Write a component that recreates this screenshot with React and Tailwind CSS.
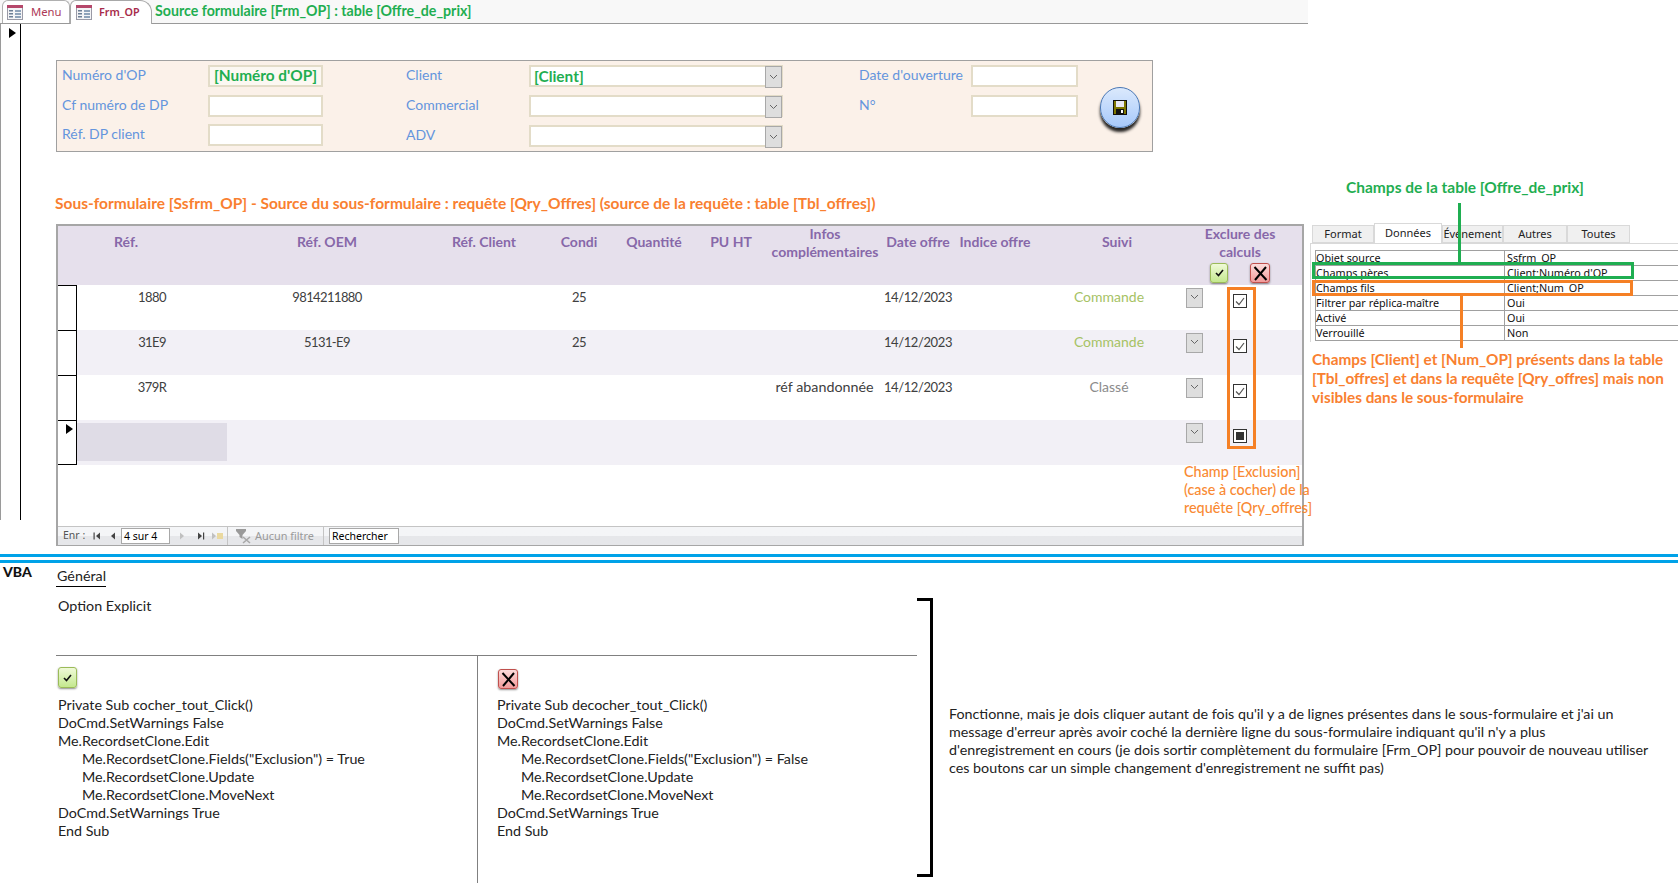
import { Fragment } from 'react';

const FormIcon = () => (
  <svg width="16" height="15" viewBox="0 0 16 15" className="shrink-0">
    <rect x="0.5" y="0.5" width="15" height="14" fill="#f4f4f6" stroke="#9a9aa6" />
    <rect x="0" y="0" width="16" height="3" fill="#b5476a" />
    <rect x="2" y="5" width="4" height="1.5" fill="#6d7f95" />
    <rect x="2" y="8" width="4" height="1.5" fill="#6d7f95" />
    <rect x="2" y="11" width="4" height="1.5" fill="#6d7f95" />
    <rect x="8" y="5" width="6" height="2" fill="#8fa3ba" />
    <rect x="8" y="8" width="6" height="2" fill="#8fa3ba" />
    <rect x="8" y="11" width="6" height="2" fill="#8fa3ba" />
  </svg>
);

const Arrow = () => (
  <svg width="7" height="10" viewBox="0 0 7 10" className="shrink-0">
    <path d="M0 0L7 5L0 10Z" fill="#000" />
  </svg>
);

const Chevron = ({ className }) => (
  <svg width="9" height="6" viewBox="0 0 9 6" className={className}>
    <path d="M1 1L4.5 4.5L8 1" fill="none" stroke="#666" strokeWidth="1" />
  </svg>
);

const ComboButton = ({ tall }) => (
  <div
    className={`flex w-[17px] justify-center border border-[#a8a8a8] bg-[#dedede] ${
      tall ? 'h-full items-center' : 'h-[20px] items-start pt-[5px]'
    }`}
  >
    <Chevron />
  </div>
);

const GreenButton = ({ className }) => (
  <div
    className={`flex h-[20px] w-[18px] items-center justify-center rounded-[3px] border border-[#9bbb59] bg-gradient-to-b from-[#f0fad8] to-[#c4e88e] shadow-[0_1px_2px_rgba(0,0,0,0.45)] ${className}`}
  >
    <svg width="9" height="8" viewBox="0 0 9 8">
      <path d="M1 4L3.5 6.5L8 1" fill="none" stroke="#111" strokeWidth="1.6" />
    </svg>
  </div>
);

const RedButton = ({ className }) => (
  <div
    className={`flex h-[20px] w-[20px] items-center justify-center rounded-[3px] border border-[#c0504d] bg-gradient-to-b from-[#fbdcdc] to-[#f19a9a] shadow-[0_1px_2px_rgba(0,0,0,0.45)] ${className}`}
  >
    <svg width="15" height="15" viewBox="0 0 15 15">
      <path d="M1.5 1L13.5 14M13 1L2 14" fill="none" stroke="#000" strokeWidth="2" />
    </svg>
  </div>
);

const CheckBox = ({ mixed }) => (
  <div className="flex h-[14px] w-[14px] items-center justify-center border border-[#333] bg-white">
    {mixed ? (
      <div className="h-[8px] w-[8px] bg-[#333]" />
    ) : (
      <svg width="10" height="9" viewBox="0 0 10 9">
        <path d="M1 4.5L4 7.5L9 1" fill="none" stroke="#555" strokeWidth="1.2" />
      </svg>
    )}
  </div>
);

const Field = ({ wide }) => <div className={`h-[22px] border-2 border-[#e3dcc8] bg-white ${wide || ''}`} />;

const Combo = ({ children }) => (
  <div className="flex h-[22px] w-[254px] border-2 border-[#e3dcc8] bg-white">
    <div className="flex-1 pl-[3px] text-[15.4px] leading-[18px] font-bold text-[#1fae51]">{children}</div>
    <div className="-my-[1px] -mr-[1px] h-[22px]">
      <ComboButton tall />
    </div>
  </div>
);

const FormLabel = ({ children, className }) => (
  <div className={`-mt-[2px] text-[14px] leading-[20px] text-[#6495dd] ${className || ''}`}>{children}</div>
);

const headers = [
  { label: 'Réf.', cls: 'ml-[38px] w-[60px]' },
  { label: 'Réf. OEM', cls: 'ml-[121px] w-[100px]' },
  { label: 'Réf. Client', cls: 'ml-[67px] w-[80px]' },
  { label: 'Condi', cls: 'ml-[30px] w-[50px]' },
  { label: 'Quantité', cls: 'ml-[15px] w-[70px]' },
  { label: 'PU HT', cls: 'ml-[17px] w-[50px]' },
  { label: 'Infos complémentaires', cls: 'ml-[14px] w-[110px] -mt-[8px]' },
  { label: 'Date offre', cls: 'ml-[5px] w-[66px]' },
  { label: 'Indice offre', cls: 'ml-[6px] w-[76px]' },
  { label: 'Suivi', cls: 'ml-[59px] w-[50px]' },
];

const rows = [
  { ref: '1880', oem: '9814211880', condi: '25', date: '14/12/2023', suivi: 'Commande', tone: 'text-[#a6c264]' },
  { ref: '31E9', oem: '5131-E9', condi: '25', date: '14/12/2023', suivi: 'Commande', tone: 'text-[#a6c264]', alt: true },
  { ref: '379R', infos: 'réf abandonnée', date: '14/12/2023', suivi: 'Classé', tone: 'text-[#8b8b8b]' },
  { alt: true, isNew: true },
];

const Row = ({ row, last }) => (
  <div className="flex h-[45px]">
    <div
      className={`w-[19px] border-t border-r border-black bg-white pt-[3px] pl-[8px] ${last ? 'border-b' : ''}`}
    >
      {row.isNew && <Arrow />}
    </div>
    <div
      className={`grid flex-1 grid-cols-[150px_200px_124px_56px_166px_103px_84px_100px_98px_28px_17px_30px_14px_1fr] text-center text-[13px] leading-[18px] text-[#404040] ${
        row.alt ? 'bg-[#f2f0f6]' : 'bg-white'
      }`}
    >
      <div className="pt-[3px] tracking-[-0.6px]">
        {row.isNew ? <div className="h-[38px] bg-[#dfdce6]" /> : row.ref}
      </div>
      <div className="pt-[3px] tracking-[-0.6px]">{row.oem}</div>
      <div />
      <div className="pt-[3px] tracking-[-0.6px]">{row.condi}</div>
      <div />
      <div className="pt-[3px] text-[14.3px] whitespace-nowrap">{row.infos}</div>
      <div className="pt-[3px] tracking-[-0.4px]">{row.date}</div>
      <div />
      <div className={`pt-[3px] text-[14px] ${row.tone || ''}`}>{row.suivi}</div>
      <div />
      <div className="pt-[3px]">
        <ComboButton />
      </div>
      <div />
      <div className="pt-[9px]">
        <CheckBox mixed={row.isNew} />
      </div>
    </div>
  </div>
);

const NavTriangle = ({ dir, color, bar }) => (
  <svg width="8" height="8" viewBox="0 0 8 8" className="shrink-0">
    {dir === 'left' ? (
      <path d={bar ? 'M7 0.5L3 4L7 7.5Z' : 'M5 0.5L1 4L5 7.5Z'} fill={color} />
    ) : (
      <path d="M1 0.5L5 4L1 7.5Z" fill={color} />
    )}
    {bar && <rect x={dir === 'left' ? 0.5 : 6} y="0.5" width="1.2" height="7" fill={color} />}
  </svg>
);

const NavBar = () => (
  <div className="flex h-[19px] items-center border-t border-[#c4c4c4] bg-gradient-to-b from-[#f4f5f7] from-50% to-[#e6e7ea] to-50% [font-family:'Noto_Sans',sans-serif] text-[10.5px] text-[#555]">
    <div className="ml-[5px] w-[30px] whitespace-nowrap">Enr :</div>
    <NavTriangle dir="left" bar color="#444" />
    <div className="ml-[9px]">
      <NavTriangle dir="left" color="#444" />
    </div>
    <div className="ml-[3px] h-[16px] w-[49px] border border-[#a8a8a8] bg-white pl-[2px] leading-[14px] text-black">
      4 sur 4
    </div>
    <div className="ml-[9px]">
      <NavTriangle dir="right" color="#c0c0c0" />
    </div>
    <div className="ml-[10px]">
      <NavTriangle dir="right" bar color="#444" />
    </div>
    <div className="ml-[6px] flex w-[14px] items-center gap-[1px]">
      <NavTriangle dir="right" color="#c0c0c0" />
      <div className="-ml-[3px] h-[6px] w-[6px] bg-[#ead9a0]" />
    </div>
    <div className="ml-[2px] h-full border-l border-[#c4c4c4]" />
    <svg width="16" height="15" viewBox="0 0 16 15" className="ml-[8px] shrink-0">
      <path d="M0 0H10V2L6.5 6V10L3.5 8V6L0 2Z" fill="#9a9a9a" />
      <path d="M7 8L14 14M14 8L7 14" stroke="#a8a8a8" strokeWidth="1.6" />
    </svg>
    <div className="ml-[3px] w-[68px] text-[10.9px] whitespace-nowrap text-[#9a9a9a]">Aucun filtre</div>
    <div className="h-full border-l border-[#c4c4c4]" />
    <div className="ml-[5px] h-[16px] w-[70px] border border-[#a8a8a8] bg-white pl-[2px] leading-[14px] text-black">
      Rechercher
    </div>
  </div>
);

const Subform = () => (
  <div className="relative mt-[11px] w-[1248px] border-x-2 border-t-2 border-b border-[#a6a6a6]">
    <div className="relative flex h-[59px] bg-[#e6e0ec] pt-[7px] text-center text-[14px] leading-[18px] font-bold text-[#8768a9]">
      {headers.map((h) => (
        <div key={h.label} className={`shrink-0 ${h.cls}`}>
          {h.label}
        </div>
      ))}
      <div className="ml-[53px] -mt-[8px] flex w-[90px] shrink-0 flex-col items-center">
        <div>Exclure des calculs</div>
        <div className="mt-[2px] flex w-[60px] justify-between">
          <GreenButton />
          <RedButton />
        </div>
      </div>
    </div>
    {rows.map((row, i) => (
      <Row key={i} row={row} last={i === rows.length - 1} />
    ))}
    <div className="h-[61px]" />
    <NavBar />
    {/* Annotations par-dessus le sous-formulaire */}
    <div className="absolute top-[61px] left-[1169px] h-[162px] w-[29px] border-[3px] border-[#f58025]" />
    <div className="absolute top-[237px] left-[1126px] w-[130px] text-[14.4px] leading-[18px] font-medium whitespace-nowrap text-[#f98a33]">
      Champ [Exclusion]
      <br />
      (case à cocher) de la
      <br />
      requête [Qry_offres]
    </div>
  </div>
);

const SaveButton = () => (
  <div className="ml-[22px] mt-[22px] flex h-[41px] w-[40px] shrink-0 items-center justify-center rounded-full border border-[#4a78b5] bg-gradient-to-b from-[#dbe9fc] to-[#a7c9fb] shadow-[0_4px_3px_rgba(0,0,0,0.85)]">
    <svg width="14" height="15" viewBox="0 0 14 15">
      <rect width="14" height="15" fill="#111" />
      <rect x="1" y="1" width="12" height="13" fill="#7d7600" />
      <rect x="3" y="1" width="8" height="6" fill="#e8e8f4" />
      <rect x="3" y="9" width="8" height="5" fill="#111" />
      <rect x="8" y="10" width="2" height="3" fill="#fff" />
    </svg>
  </div>
);

const TopLeft = () => (
  <div className="w-[1308px] shrink-0">
    <div className="flex h-[24px] border-b border-[#999] bg-[#f8f8f8] pl-[2px]">
      <div className="flex h-[23px] w-[68px] items-center gap-[8px] rounded-t-[6px] border-x border-t border-[#b0b0b0] bg-white pl-[4px] [font-family:'Noto_Sans',sans-serif] text-[11.3px] text-[#ad3a57]">
        <FormIcon />
        Menu
      </div>
      <div className="flex h-[24px] w-[82px] items-center gap-[7px] rounded-tl-[6px] rounded-tr-[12px] border-x border-t border-[#a8a8a8] bg-white pl-[5px] [font-family:'Noto_Sans',sans-serif] text-[10.8px] font-semibold text-[#a72b4a]">
        <FormIcon />
        Frm_OP
      </div>
      <div className="pl-[3px] text-[14.2px] leading-[22px] font-bold whitespace-nowrap text-[#1fae51]">
        Source formulaire [Frm_OP] : table [Offre_de_prix]
      </div>
    </div>
    <div className="flex">
      <div className="h-[496px] w-[21px] shrink-0 border-x border-l-[#9a9a9a] border-r-black pt-[4px] pl-[8px]">
        <Arrow />
      </div>
      <div className="pl-[35px]">
        <div className="mt-[36px] flex h-[92px] w-[1097px] border border-[#a0a0a0] bg-[#fbf1e9] pt-[4px]">
          <div className="w-[349px] pl-[5px]">
            <div className="flex h-[22px] items-center">
              <FormLabel className="w-[146px]">Numéro d'OP</FormLabel>
              <div className="flex h-[22px] w-[115px] items-center justify-center border-2 border-[#e3dcc8] bg-[#fcf8f2] text-[15.4px] font-bold text-[#1fae51]">
                [Numéro d'OP]
              </div>
            </div>
            <div className="mt-[8px] flex h-[22px] items-center">
              <FormLabel className="w-[146px]">Cf numéro de DP</FormLabel>
              <Field wide="w-[115px]" />
            </div>
            <div className="mt-[7px] flex h-[22px] items-center">
              <FormLabel className="w-[146px]">Réf. DP client</FormLabel>
              <Field wide="w-[115px]" />
            </div>
          </div>
          <div className="w-[453px]">
            {['Client', 'Commercial', 'ADV'].map((label, i) => (
              <div key={label} className={`flex h-[22px] items-center ${i > 0 ? 'mt-[8px]' : ''}`}>
                <FormLabel className="w-[123px]">{label}</FormLabel>
                <Combo>{i === 0 ? '[Client]' : ''}</Combo>
              </div>
            ))}
          </div>
          <div className="w-[219px]">
            <div className="flex h-[22px] items-center">
              <FormLabel className="w-[112px] whitespace-nowrap">Date d'ouverture</FormLabel>
              <Field wide="w-[107px]" />
            </div>
            <div className="mt-[8px] flex h-[22px] items-center">
              <FormLabel className="w-[112px]">N°</FormLabel>
              <Field wide="w-[107px]" />
            </div>
          </div>
          <SaveButton />
        </div>
        <div className="mt-[41px] -ml-[1px] h-[20px] text-[15.5px] leading-[20px] font-bold whitespace-nowrap text-[#f98030]">
          Sous-formulaire [Ssfrm_OP] - Source du sous-formulaire : requête [Qry_Offres] (source de la requête : table [Tbl_offres])
        </div>
        <Subform />
      </div>
    </div>
  </div>
);

const tabs = [
  { label: 'Format', cls: 'w-[62px]' },
  { label: 'Données', cls: 'w-[68px] h-[20px] bg-white border-b-0', active: true },
  { label: 'Événement', cls: 'w-[61px]' },
  { label: 'Autres', cls: 'w-[64px]' },
  { label: 'Toutes', cls: 'w-[63px]' },
];

const props = [
  ['Objet source', 'Ssfrm_OP'],
  ['Champs pères', "Client;Numéro d'OP"],
  ['Champs fils', 'Client;Num_OP'],
  ['Filtrer par réplica-maître', 'Oui'],
  ['Activé', 'Oui'],
  ['Verrouillé', 'Non'],
];

const PropertySheet = () => (
  <div className="relative h-[554px] flex-1 [font-family:'Noto_Sans',sans-serif]">
    <div className="pt-[177px] pl-[38px] [font-family:Lato,sans-serif] text-[15.5px] leading-[20px] font-bold whitespace-nowrap text-[#1fae51]">
      Champs de la table [Offre_de_prix]
    </div>
    <div className="mt-[26px] flex h-[20px] items-end pl-[4px] text-[11px] text-[#222]">
      {tabs.map((t) => (
        <div
          key={t.label}
          className={`flex h-[18px] items-center justify-center border border-[#d9d9d9] bg-[#f0f0f0] whitespace-nowrap ${t.cls}`}
        >
          {t.label}
        </div>
      ))}
    </div>
    <div className="ml-[2px] h-[99px] border-t border-l border-[#d9d9d9] pt-[6px] pl-[4px]">
      <div className="border-t border-l border-[#a0a0a0] text-[10.8px] leading-[14px] text-[#111]">
        {props.map(([name, value]) => (
          <div key={name} className="grid h-[15px] grid-cols-[189px_1fr] border-b border-[#a0a0a0]">
            <div className="border-r border-[#a0a0a0] whitespace-nowrap">{name}</div>
            <div className="pl-[2px] whitespace-nowrap">{value}</div>
          </div>
        ))}
      </div>
    </div>
    <div className="mt-[8px] pl-[4px] [font-family:Lato,sans-serif] text-[15.3px] leading-[19px] font-bold whitespace-nowrap text-[#f98030]">
      Champs [Client] et [Num_OP] présents dans la table
      <br />
      [Tbl_offres] et dans la requête [Qry_offres] mais non
      <br />
      visibles dans le sous-formulaire
    </div>
    {/* Encadrés et traits de renvoi */}
    <div className="absolute top-[203px] left-[150px] h-[60px] w-[3px] bg-[#1fae51]" />
    <div className="absolute top-[262px] left-[4px] h-[17px] w-[322px] border-[3px] border-[#1fae51]" />
    <div className="absolute top-[280px] left-[4px] h-[16px] w-[321px] border-[3px] border-[#f58025]" />
    <div className="absolute top-[296px] left-[152px] h-[52px] w-[3px] bg-[#f58025]" />
  </div>
);

const CodeBlock = ({ name, value }) => (
  <div className="text-[14.3px] leading-[18px] whitespace-nowrap text-[#222]">
    <div>Private Sub {name}()</div>
    <div>DoCmd.SetWarnings False</div>
    <div>Me.RecordsetClone.Edit</div>
    <div className="pl-[24px]">Me.RecordsetClone.Fields("Exclusion") = {value}</div>
    <div className="pl-[24px]">Me.RecordsetClone.Update</div>
    <div className="pl-[24px]">Me.RecordsetClone.MoveNext</div>
    <div>DoCmd.SetWarnings True</div>
    <div>End Sub</div>
  </div>
);

const Vba = () => (
  <div className="flex">
    <div className="w-[917px] shrink-0">
      <div className="flex h-[92px]">
        <div className="w-[56px] pl-[3px] text-[14px] leading-[18px] font-black text-[#111]">VBA</div>
        <div>
          <div className="-mt-[2px] inline-block border-b border-black pb-[2px] pl-[1px] text-[14.3px] leading-[17px] text-[#222]">Général</div>
          <div className="mt-[10px] pl-[2px] text-[14.3px] leading-[18px] text-[#222]">Option Explicit</div>
        </div>
      </div>
      <div className="ml-[56px] flex h-[228px] border-t border-[#808080]">
        <div className="w-[422px] border-r border-[#808080] pt-[11px] pl-[2px]">
          <GreenButton className="h-[21px] w-[19px]" />
          <div className="mt-[8px]">
            <CodeBlock name="cocher_tout_Click" value="True" />
          </div>
        </div>
        <div className="pt-[13px] pl-[19px]">
          <RedButton className="ml-[1px]" />
          <div className="mt-[7px]">
            <CodeBlock name="decocher_tout_Click" value="False" />
          </div>
        </div>
      </div>
    </div>
    <div className="mt-[35px] h-[279px] w-[16px] border-y-[3px] border-r-[3px] border-black" />
    <div className="mt-[142px] ml-[16px] text-[14.3px] leading-[18px] whitespace-nowrap text-[#222]">
      Fonctionne, mais je dois cliquer autant de fois qu'il y a de lignes présentes dans le sous-formulaire et j'ai un
      <br />
      message d'erreur après avoir coché la dernière ligne du sous-formulaire indiquant qu'il n'y a plus
      <br />
      d'enregistrement en cours (je dois sortir complètement du formulaire [Frm_OP] pour pouvoir de nouveau utiliser
      <br />
      ces boutons car un simple changement d'enregistrement ne suffit pas)
    </div>
  </div>
);

export default function App() {
  return (
    <div className="h-[890px] w-[1678px] overflow-hidden bg-white [font-family:Lato,sans-serif]">
      <div className="flex h-[554px]">
        <TopLeft />
        <PropertySheet />
      </div>
      <div className="h-[3px] bg-[#00a2e8]" />
      <div className="mt-[3px] h-[3px] bg-[#00a2e8]" />
      <Vba />
    </div>
  );
}
